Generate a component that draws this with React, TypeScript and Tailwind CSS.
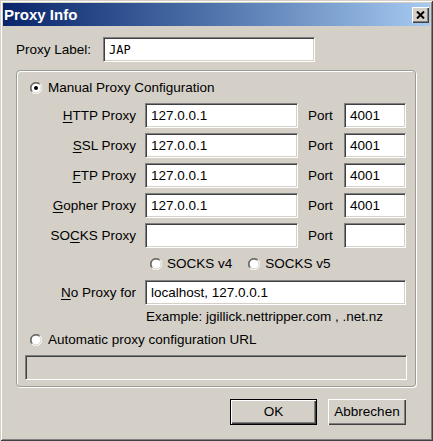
import React from "react";

function Radio({ checked }: { checked?: boolean }) {
  return (
    <svg width="12" height="12" viewBox="0 0 12 12" className="shrink-0">
      <circle cx="6" cy="6" r="5.5" fill="#fff" />
      <path d="M1.76 10.24 A6 6 0 0 1 10.24 1.76" stroke="#808080" strokeWidth="1" fill="none" />
      <path d="M10.24 1.76 A6 6 0 0 1 1.76 10.24" stroke="#ffffff" strokeWidth="1" fill="none" />
      <path d="M2.46 9.54 A5 5 0 0 1 9.54 2.46" stroke="#404040" strokeWidth="1" fill="none" />
      <path d="M9.54 2.46 A5 5 0 0 1 2.46 9.54" stroke="#d4d0c8" strokeWidth="1" fill="none" />
      {checked && <circle cx="6" cy="6" r="2" fill="#000" />}
    </svg>
  );
}

function Field({ value, w, disabled }: { value?: string; w: string; disabled?: boolean }) {
  return (
    <div
      className={`${w} h-[25px] flex items-center pl-[5px] border border-t-[#808080] border-l-[#808080] border-b-white border-r-white shadow-[inset_1px_1px_0_#404040,inset_-1px_-1px_0_#d4d0c8] ${
        disabled ? "bg-[#d4d0c8]" : "bg-white"
      } whitespace-nowrap overflow-hidden`}
    >
      {value}
    </div>
  );
}

function Row({ label, u, value, port }: { label: [string, string, string]; u?: boolean; value: string; port: string }) {
  return (
    <div className="flex items-center h-[25px]">
      <div className="w-[119px] text-right whitespace-nowrap">
        {label[0]}
        <span className="underline underline-offset-[2px]">{label[1]}</span>
        {label[2]}
      </div>
      <div className="ml-[9px]">
        <Field w="w-[153px]" value={value} />
      </div>
      <div className="ml-[10px] w-[36px]">Port</div>
      <Field w="w-[62px]" value={port} />
    </div>
  );
}

function Button({ children, w, def }: { children: React.ReactNode; w: string; def?: boolean }) {
  return (
    <div
      className={`${w} h-[26px] flex items-center justify-center bg-[#d4d0c8] ${
        def
          ? "border border-black shadow-[inset_1px_1px_0_#fff,inset_-1px_-1px_0_#404040,inset_-2px_-2px_0_#808080]"
          : "shadow-[inset_1px_1px_0_#fff,inset_-1px_-1px_0_#404040,inset_-2px_-2px_0_#808080]"
      }`}
    >
      {children}
    </div>
  );
}

export default function App() {
  return (
    <div className="w-[433px] h-[441px] bg-[#d4d0c8] p-[3px] font-['Liberation_Sans',Arial,sans-serif] text-[13.5px] text-black shadow-[inset_1px_1px_0_#d4d0c8,inset_-1px_-1px_0_#404040,inset_2px_2px_0_#fff,inset_-2px_-2px_0_#808080] flex flex-col select-none leading-none">
      <div className="h-[23px] shrink-0 flex items-center justify-between bg-gradient-to-r from-[#0a246a] to-[#a6caf0] pl-[1px] pr-[1px]">
        <span className="text-white font-bold text-[15px]">Proxy Info</span>
        <div className="w-[17px] h-[16px] bg-[#d4d0c8] flex items-center justify-center shadow-[inset_1px_1px_0_#fff,inset_-1px_-1px_0_#404040,inset_-2px_-2px_0_#808080]">
          <svg width="9" height="8" viewBox="0 0 9 8">
            <path d="M1 0.5 L8 7.5 M8 0.5 L1 7.5" stroke="#000" strokeWidth="2" />
          </svg>
        </div>
      </div>

      <div className="px-[13px] pt-[11px] flex flex-col">
        <div className="flex items-center h-[25px]">
          <div className="w-[87px] whitespace-nowrap">Proxy Label:</div>
          <div className="w-[212px] h-[25px] flex items-center pl-[5px] bg-white border border-t-[#808080] border-l-[#808080] border-b-white border-r-white shadow-[inset_1px_1px_0_#404040,inset_-1px_-1px_0_#d4d0c8] font-['DejaVu_Sans_Mono',monospace] text-[12px]">
            JAP
          </div>
        </div>

        <div className="mt-[8px] w-[400px] h-[317px] rounded-[4px] border border-[#9c9c94] shadow-[1px_1px_0_#fff,inset_1px_1px_0_#fff] flex flex-col">
          <div className="mt-[9px] h-[16px] flex items-center pl-[13px] gap-[6px]">
            <Radio checked />
            <span>Manual Proxy Configuration</span>
          </div>

          <div className="mt-[7px] flex flex-col gap-[5px]">
            <Row label={["", "H", "TTP Proxy"]} value="127.0.0.1" port="4001" />
            <Row label={["", "S", "SL Proxy"]} value="127.0.0.1" port="4001" />
            <Row label={["", "F", "TP Proxy"]} value="127.0.0.1" port="4001" />
            <Row label={["", "G", "opher Proxy"]} value="127.0.0.1" port="4001" />
            <Row label={["SO", "C", "KS Proxy"]} value="" port="" />
          </div>

          <div className="h-[32px] flex items-center pl-[133px]">
            <Radio />
            <span className="ml-[5px]">SOCKS v4</span>
            <span className="ml-[16px]">
              <Radio />
            </span>
            <span className="ml-[5px]">SOCKS v5</span>
          </div>

          <div className="flex items-center h-[25px]">
            <div className="w-[119px] text-right whitespace-nowrap">
              <span className="underline underline-offset-[2px]">N</span>o Proxy for
            </div>
            <div className="ml-[9px]">
              <Field w="w-[261px]" value="localhost, 127.0.0.1" />
            </div>
          </div>

          <div className="h-[23px] flex items-center pl-[129px] whitespace-nowrap">
            Example: jgillick.nettripper.com , .net.nz
          </div>

          <div className="h-[24px] flex items-center pl-[13px] gap-[6px]">
            <Radio />
            <span>Automatic proxy configuration URL</span>
          </div>

          <div className="mt-[3px] ml-[8px]">
            <Field w="w-[382px]" disabled />
          </div>
        </div>

        <div className="mt-[12px] flex justify-end gap-[11px] pr-[11px]">
          <Button w="w-[87px]" def>
            OK
          </Button>
          <Button w="w-[78px]">Abbrechen</Button>
        </div>
      </div>
    </div>
  );
}
